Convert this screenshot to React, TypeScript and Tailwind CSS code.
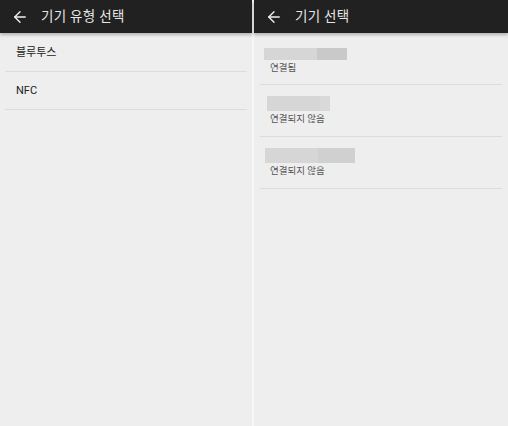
import { ArrowLeft } from 'lucide-react';

const devices = [
  { bar: 'ml-[4px] mt-[15px] h-[12px]', a: 'w-[53px]', b: 'w-[30px] bg-[#c9c9c9]', status: '연결됨' },
  { bar: 'ml-[7px] mt-[11px] h-[15px]', a: 'w-[53px]', b: 'w-[10px] bg-[#d9d9d9]', status: '연결되지 않음' },
  { bar: 'ml-[5px] mt-[11px] h-[15px]', a: 'w-[53px]', b: 'w-[37px] bg-[#d0d0d0]', status: '연결되지 않음' },
];

function Header({ title }: { title: string }) {
  return (
    <div className="h-[33px] bg-[#212121] flex items-center pl-[11px] shadow-[0_2px_3px_rgba(0,0,0,0.25)] relative z-10">
      <ArrowLeft size={18} strokeWidth={1.8} className="text-[#f0f0f0]" />
      <span className="ml-[12px] text-[13.5px] text-[#e6e6e6] tracking-[0.3px]">{title}</span>
    </div>
  );
}

export default function App() {
  return (
    <div
      className="w-[508px] h-[426px] flex bg-[#f7f7f7] gap-[2px] overflow-hidden"
      style={{ fontFamily: 'Roboto, "Noto Sans CJK KR", sans-serif' }}
    >
      <div className="w-[252px] h-full bg-[#eeeeee] flex flex-col">
        <Header title="기기 유형 선택" />
        <div className="px-[5px]">
          <div className="h-[39px] flex items-center pl-[11px] pt-[3px] text-[11px] text-[#222] border-b border-[#dcdcdc]">
            블루투스
          </div>
          <div className="h-[38px] flex items-center pl-[11px] pt-[2px] text-[11px] text-[#222] border-b border-[#dcdcdc]">
            NFC
          </div>
        </div>
      </div>

      <div className="flex-1 h-full bg-[#eeeeee] flex flex-col">
        <Header title="기기 선택" />
        <div className="pl-[6px] pr-[6px]">
          {devices.map((d, i) => (
            <div key={i} className="h-[52px] border-b border-[#dcdcdc] flex flex-col">
              <div className={`flex ${d.bar}`}>
                <div className={`${d.a} h-full bg-[#d6d6d6]`} />
                <div className={`${d.b} h-full`} />
              </div>
              <div className="ml-[10px] mt-[1px] text-[9.5px] leading-[14px] text-[#555]">{d.status}</div>
            </div>
          ))}
        </div>
      </div>
    </div>
  );
}
